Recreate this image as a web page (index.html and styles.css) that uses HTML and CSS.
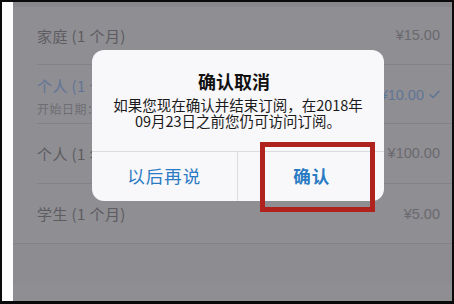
FILE: index.html
```html
<!DOCTYPE html>
<html lang="zh">
<head>
<meta charset="utf-8">
<link rel="stylesheet" href="styles.css">
</head>
<body>
<div class="frame">
  <div class="strip"></div>
  <div class="screen">
    <div class="topband"></div>
    <div class="row r1 inset">
      <span class="title">家庭 (1 个月)</span>
      <span class="price">¥15.00</span>
    </div>
    <div class="row r2 inset">
      <div class="col">
        <span class="title blue">个人 (1 个月)</span>
        <span class="sub">开始日期：2018年8月23日</span>
      </div>
      <span class="price blue">¥10.00 <svg class="check" viewBox="0 0 12 10" width="11" height="9"><path d="M1 5.2 L4.3 8.4 L11 1.4" fill="none" stroke="#5f7596" stroke-width="1.6" stroke-linecap="round" stroke-linejoin="round"/></svg></span>
    </div>
    <div class="row r3 inset">
      <span class="title">个人 (1 年)</span>
      <span class="price">¥100.00</span>
    </div>
    <div class="row r4 full">
      <span class="title">学生 (1 个月)</span>
      <span class="price">¥5.00</span>
    </div>
    <div class="band full"></div>
    <div class="band2"></div>

    <div class="alert">
      <div class="alert-body">
        <div class="alert-title">确认取消</div>
        <div class="alert-msg">如果您现在确认并结束订阅，在2018年<br>09月23日之前您仍可访问订阅。</div>
      </div>
      <div class="alert-buttons">
        <div class="btn">以后再说</div>
        <div class="btn bold">确认</div>
      </div>
    </div>
    <div class="highlight"></div>
  </div>
</div>
</body>
</html>
```
FILE: styles.css
```css
html, body {
  margin: 0;
  padding: 0;
  background: #0a0a0a;
}
body {
  font-family: "Noto Sans CJK SC", "Liberation Sans", sans-serif;
}
.frame {
  box-sizing: border-box;
  width: 454px;
  height: 304px;
  border-top: 2px solid #0a0a0a;
  border-left: 2px solid #0a0a0a;
  border-right: 2px solid #0a0a0a;
  border-bottom: 3px solid #0a0a0a;
  display: flex;
  overflow: hidden;
}
.strip {
  width: 11px;
  background: #fdfdfd;
  flex: none;
}
.screen {
  position: relative;
  flex: 1;
  background: #8f8e93;
  display: flex;
  flex-direction: column;
}
.topband {
  height: 5px;
  background: #88878c;
  flex: none;
}
.row {
  display: flex;
  align-items: center;
  justify-content: space-between;
  padding: 0 12px 0 24px;
  flex: none;
  box-sizing: border-box;
  position: relative;
}
.row.inset::after {
  content: "";
  position: absolute;
  left: 24px;
  right: 0;
  bottom: 0;
  height: 1px;
  background: #838287;
}
.row.full {
  border-bottom: 1px solid #838287;
}
.r1 { height: 58px; padding-bottom: 2px; }
.r2 { height: 59px; }
.r3 { height: 60px; padding-bottom: 2px; }
.r4 { height: 60px; }
.band {
  height: 40px;
  flex: none;
  background: #8d8c91;
}
.band2 {
  flex: 1;
  background: #8f8e93;
}
.title {
  font-size: 15px;
  color: #5d5c61;
  letter-spacing: 0.4px;
}
.title.blue { color: #5f7596; }
.col {
  display: flex;
  flex-direction: column;
  gap: 4px;
  padding-top: 2px;
}
.sub {
  font-size: 12px;
  color: #6e6d72;
  letter-spacing: 0.5px;
}
.price {
  font-family: "Liberation Sans", sans-serif;
  font-size: 14.5px;
  color: #6a696e;
  display: flex;
  align-items: center;
}
.price.blue { color: #5f7596; }
.check {
  margin-left: 5px;
}
.alert {
  position: absolute;
  left: 79px;
  top: 48px;
  width: 292px;
  height: 151px;
  background: #f8f7f9;
  border-radius: 12px;
  display: flex;
  flex-direction: column;
  overflow: hidden;
}
.alert-body {
  height: 102px;
  box-sizing: border-box;
  border-bottom: 1px solid #dcdbdf;
  display: flex;
  flex-direction: column;
  align-items: center;
  padding-top: 19px;
}
.alert-title {
  font-size: 18px;
  font-weight: 700;
  color: #111;
  line-height: 24px;
  margin-left: -8px;
}
.alert-msg {
  margin-top: 4px;
  font-size: 14.5px;
  line-height: 15.5px;
  color: #1a1a1a;
  text-align: center;
}
.alert-buttons {
  flex: 1;
  display: flex;
}
.btn {
  flex: 1;
  display: flex;
  align-items: center;
  justify-content: center;
  font-size: 17.5px;
  color: #2a7bc4;
  letter-spacing: 1px;
  padding-bottom: 2px;
}
.btn + .btn {
  border-left: 1px solid #dcdbdf;
}
.btn.bold {
  font-weight: 700;
  padding-left: 2px;
}
.highlight {
  position: absolute;
  left: 247px;
  top: 140px;
  width: 115px;
  height: 70px;
  box-sizing: border-box;
  border: 5px solid #b0221d;
}
```
